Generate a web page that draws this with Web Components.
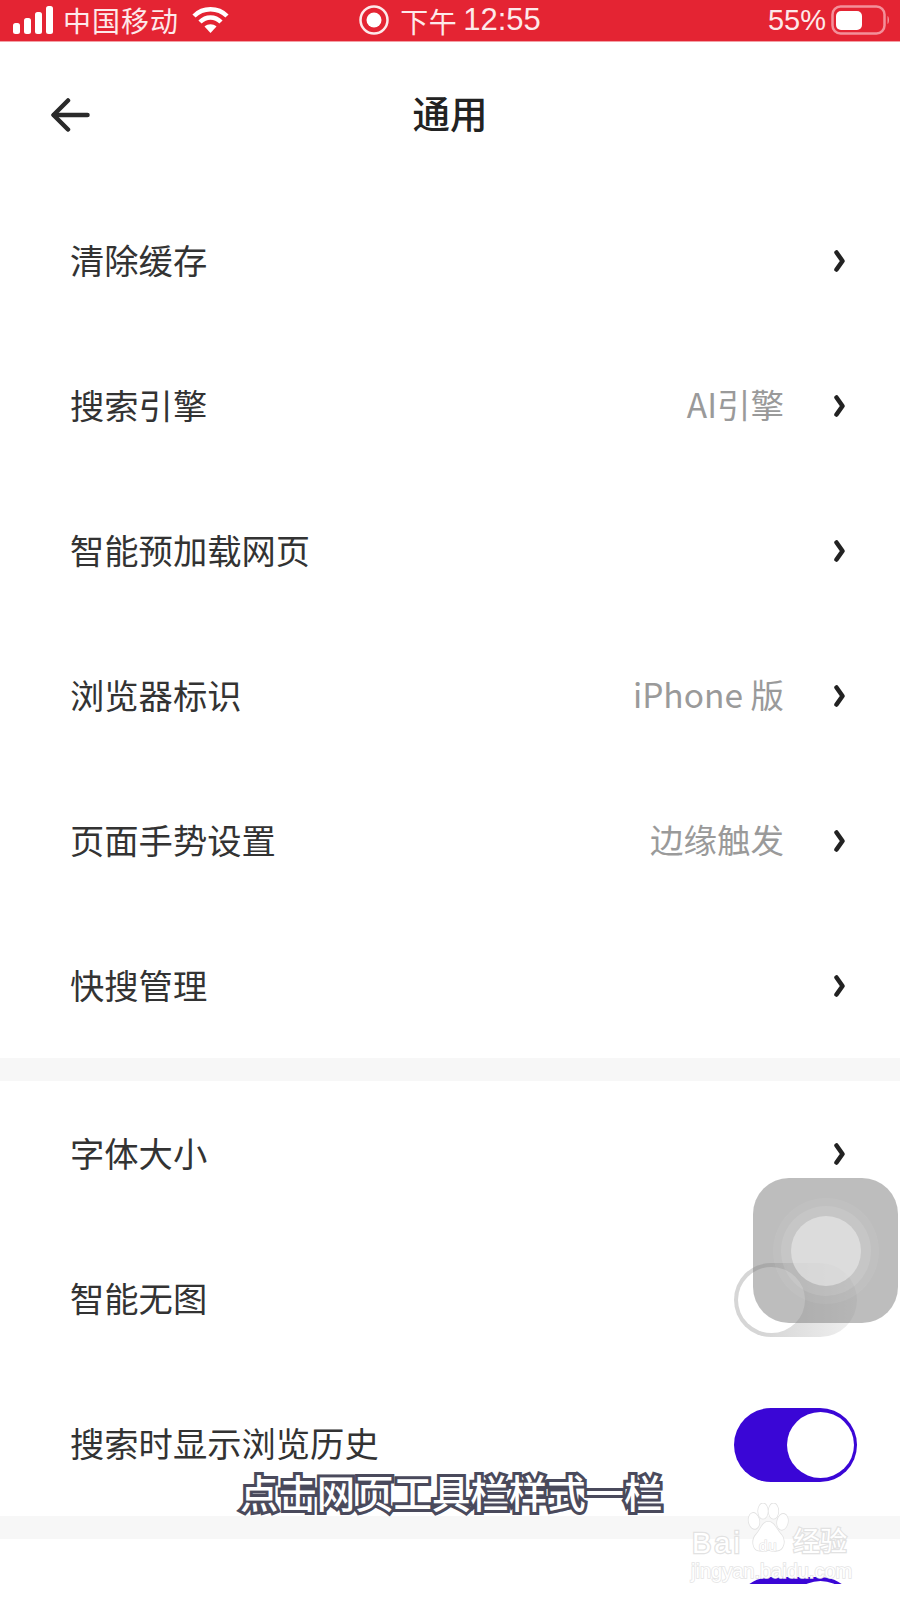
<!DOCTYPE html>
<html lang="zh">
<head>
<meta charset="utf-8">
<title>通用</title>
<style>
    html, body {
        margin: 0;
        background: #fff;
    }

    body {
        font-family: "Noto Sans CJK SC", "Liberation Sans", sans-serif;
    }

    #screen {
        position: relative;
        height: 1584px;
        overflow: hidden;
        background: #fff;
    }
</style>
</head>
<body>
<div id="screen">
    <status-bar></status-bar>
    <nav-header>通用</nav-header>
    <setting-row>清除缓存</setting-row>
    <setting-row value="AI引擎">搜索引擎</setting-row>
    <setting-row>智能预加载网页</setting-row>
    <setting-row value="iPhone 版">浏览器标识</setting-row>
    <setting-row value="边缘触发">页面手势设置</setting-row>
    <setting-row>快搜管理</setting-row>
    <section-gap></section-gap>
    <setting-row>字体大小</setting-row>
    <setting-row toggle="off">智能无图</setting-row>
    <setting-row toggle="on">搜索时显示浏览历史</setting-row>
    <section-gap></section-gap>
    <setting-row toggle="on" class="last"></setting-row>
    <assist-touch></assist-touch>
    <video-caption>点击网页工具栏样式一栏</video-caption>
    <baidu-mark></baidu-mark>
</div>

<script>
class StatusBar extends HTMLElement {
    constructor() {
        super();
        this.attachShadow({ mode: 'open' });
        this.shadowRoot.innerHTML = `
            <style>
                :host {
                    display: grid;
                    grid-template-columns: 1fr auto 1fr;
                    align-items: center;
                    height: 42px;
                    box-sizing: border-box;
                    padding: 0 10px 4px 13px;
                    background: #e42433;
                    border-bottom: 1px solid #f3a0a6;
                    color: #fde9ea;
                    font-size: 28px;
                    line-height: 36px;
                    overflow: hidden;
                }

                .side {
                    display: flex;
                    align-items: center;
                }

                .right {
                    justify-content: flex-end;
                }

                svg {
                    display: block;
                    flex: none;
                }

                #carrier {
                    margin: 0 13px 0 10px;
                    letter-spacing: 1px;
                }

                #ampm {
                    margin: 3px 0 0 11px;
                    letter-spacing: 0.5px;
                }

                #time {
                    margin-left: 6px;
                    font-family: "Liberation Sans", sans-serif;
                    font-size: 31px;
                }

                #percent {
                    margin-right: 5px;
                    font-family: "Liberation Sans", sans-serif;
                    font-size: 29px;
                }

                .center {
                    display: flex;
                    align-items: center;
                    margin-left: -3px;
                }
            </style>
            <div class="side">
                <svg width="40" height="28" viewBox="0 0 40 28" fill="#fff">
                    <rect x="0" y="17" width="7" height="11" rx="2.5"/>
                    <rect x="11" y="12" width="7" height="16" rx="2.5"/>
                    <rect x="22" y="6" width="7" height="22" rx="2.5"/>
                    <rect x="33" y="0" width="7" height="28" rx="2.5"/>
                </svg>
                <span id="carrier">中国移动</span>
                <svg width="37" height="26" viewBox="0 0 37 26" fill="none" stroke="#fff" stroke-width="4.5">
                    <path d="M2 9C11 0 26 0 35 9"/>
                    <path d="M8 15C14 9 23 9 29 15"/>
                    <path d="M18.5 26L12.5 19.500C16 16.500 21 16.500 24.500 19.500Z" fill="#fff" stroke="none"/>
                </svg>
            </div>
            <div class="center">
                <svg width="30" height="30" viewBox="0 0 30 30">
                    <circle cx="15" cy="15" r="13.500" fill="none" stroke="#fde9ea" stroke-width="2.500"/>
                    <circle cx="15" cy="15" r="7.500" fill="#fff"/>
                </svg>
                <span id="ampm">下午</span>
                <span id="time">12:55</span>
            </div>
            <div class="side right">
                <span id="percent">55%</span>
                <svg width="59" height="30" viewBox="0 0 59 30">
                    <rect x="1.500" y="1.500" width="52" height="27" rx="8" fill="none" stroke="#f3909a" stroke-width="2.500"/>
                    <rect x="5" y="6" width="26" height="19" rx="5" fill="#fff"/>
                    <path d="M56.500 11C58.500 12 58.500 18 56.500 19Z" fill="#f3909a"/>
                </svg>
            </div>
        `;
    }
}

class NavHeader extends HTMLElement {
    constructor() {
        super();
        this.attachShadow({ mode: 'open' });
        this.shadowRoot.innerHTML = `
            <style>
                :host {
                    display: grid;
                    grid-template-columns: 1fr auto 1fr;
                    align-items: center;
                    height: 146px;
                    box-sizing: border-box;
                    padding: 0 51px;
                    color: #222;
                }

                svg {
                    display: block;
                }

                #title {
                    font-size: 37.500px;
                    font-weight: 500;
                    line-height: 50px;
                    margin-top: -7px;
                }
            </style>
            <svg width="39" height="34" viewBox="0 0 39 34" fill="none" stroke="#2a2a2a" stroke-width="4.500" stroke-linecap="round" stroke-linejoin="round">
                <path d="M36.500 17H3"/>
                <path d="M17 2.500L2.500 17L17 31.500"/>
            </svg>
            <div id="title"><slot></slot></div>
            <div></div>
        `;
    }
}

class ToggleSwitch extends HTMLElement {
    constructor() {
        super();
        this.attachShadow({ mode: 'open' });
        this.shadowRoot.innerHTML = `
            <style>
                :host {
                    display: block;
                    flex: none;
                    position: relative;
                    width: 123px;
                    height: 74px;
                    margin-top: 3px;
                    box-sizing: border-box;
                    border-radius: 37px;
                    background: #3a06d6;
                }

                :host([state="off"]) {
                    background: linear-gradient(90deg, #d6d6d6 25%, #f1f1f1 100%);
                }

                #knob {
                    position: absolute;
                    top: 4px;
                    right: 3px;
                    width: 67px;
                    height: 66px;
                    border-radius: 50%;
                    background: #fff;
                }

                :host([state="off"]) #knob {
                    left: 4px;
                    right: auto;
                }
            </style>
            <div id="knob"></div>
        `;
    }
}

class SettingRow extends HTMLElement {
    constructor() {
        super();
        this.attachShadow({ mode: 'open' });
        this.shadowRoot.innerHTML = `
            <style>
                :host {
                    display: flex;
                    align-items: center;
                    height: 145px;
                    box-sizing: border-box;
                    padding: 0 55px 0 70px;
                    font-size: 34.300px;
                    line-height: 48px;
                    color: #333;
                }

                :host([toggle]) {
                    padding-right: 43px;
                }

                :host(.last) {
                    height: 147px;
                }

                #label {
                    flex: 1;
                    margin-top: -3px;
                }

                #value {
                    margin: -3px 50px 0 0;
                    font-size: 33.500px;
                    color: #9a9a9a;
                }

                svg {
                    display: block;
                    flex: none;
                }
            </style>
            <div id="label"><slot></slot></div>
        `;

        if (this.hasAttribute('toggle')) {
            const toggle = document.createElement('toggle-switch');
            toggle.setAttribute('state', this.getAttribute('toggle'));
            this.shadowRoot.appendChild(toggle);
            return;
        }

        if (this.hasAttribute('value')) {
            const value = document.createElement('div');
            value.id = 'value';
            value.textContent = this.getAttribute('value');
            this.shadowRoot.appendChild(value);
        }

        const chevron = document.createElement('template');
        chevron.innerHTML = `
            <svg width="11" height="22" viewBox="0 0 11 22" fill="none" stroke="#222" stroke-width="4.500" stroke-linecap="round" stroke-linejoin="round">
                <path d="M2.500 2.500L8.500 11L2.500 19.500"/>
            </svg>
        `;
        this.shadowRoot.appendChild(chevron.content);
    }
}

class SectionGap extends HTMLElement {
    constructor() {
        super();
        this.attachShadow({ mode: 'open' });
        this.shadowRoot.innerHTML = `
            <style>
                :host {
                    display: block;
                    height: 23px;
                    background: #f7f7f7;
                }
            </style>
        `;
    }
}

class AssistTouch extends HTMLElement {
    constructor() {
        super();
        this.attachShadow({ mode: 'open' });
        this.shadowRoot.innerHTML = `
            <style>
                :host {
                    position: absolute;
                    top: 1178px;
                    left: 753px;
                    width: 145px;
                    height: 145px;
                    display: grid;
                    place-items: center;
                    border-radius: 36px;
                    background: rgba(128, 128, 128, 0.52);
                }

                .ring {
                    display: grid;
                    place-items: center;
                    border-radius: 50%;
                    background: rgba(255, 255, 255, 0.06);
                }

                #outer {
                    width: 106px;
                    height: 106px;
                }

                #middle {
                    width: 90px;
                    height: 90px;
                    background: rgba(255, 255, 255, 0.1);
                }

                #inner {
                    width: 70px;
                    height: 70px;
                    background: rgba(235, 235, 235, 0.6);
                }
            </style>
            <div class="ring" id="outer">
                <div class="ring" id="middle">
                    <div class="ring" id="inner"></div>
                </div>
            </div>
        `;
    }
}

class VideoCaption extends HTMLElement {
    constructor() {
        super();
        this.attachShadow({ mode: 'open' });
        this.shadowRoot.innerHTML = `
            <style>
                :host {
                    position: absolute;
                    top: 1464px;
                    left: 240px;
                    width: 422px;
                    font-size: 38.400px;
                    font-weight: 500;
                    line-height: 54px;
                    white-space: nowrap;
                    color: #fff;
                    paint-order: stroke fill;
                    -webkit-text-stroke: 6px #4a4a5c;
                    text-shadow: 1px 2px 0 #4a4a5c;
                }
            </style>
            <slot></slot>
        `;
    }
}

class BaiduMark extends HTMLElement {
    constructor() {
        super();
        this.attachShadow({ mode: 'open' });
        this.shadowRoot.innerHTML = `
            <style>
                :host {
                    position: absolute;
                    top: 1500px;
                    left: 688px;
                    width: 170px;
                    height: 84px;
                    font-family: "Liberation Sans", "Noto Sans CJK SC", sans-serif;
                    color: #fff;
                    paint-order: stroke fill;
                    -webkit-text-stroke: 2.500px #e2e2e2;
                    white-space: nowrap;
                }

                svg {
                    position: absolute;
                    top: 3px;
                    left: 57px;
                }

                span {
                    position: absolute;
                }

                #bai {
                    top: 30px;
                    left: 4px;
                    font-size: 29px;
                    line-height: 26px;
                    letter-spacing: 3px;
                }

                #du {
                    top: 38px;
                    left: 71px;
                    font-size: 15px;
                    line-height: 16px;
                    letter-spacing: 1px;
                    -webkit-text-stroke: 1.200px #e2e2e2;
                }

                #jy {
                    top: 27px;
                    left: 105px;
                    font-size: 27px;
                    line-height: 26px;
                    font-family: "Noto Sans CJK SC", sans-serif;
                }

                #url {
                    top: 60px;
                    left: 3px;
                    font-size: 20px;
                    line-height: 22px;
                    -webkit-text-stroke: 1.500px #e4e4e4;
                }
            </style>
            <svg width="48" height="52" viewBox="0 0 64 58" preserveAspectRatio="none" fill="#fff" stroke="#e2e2e2" stroke-width="2">
                <ellipse cx="12" cy="20" rx="7" ry="9" transform="rotate(-18 12 20)"/>
                <ellipse cx="24" cy="9" rx="6.500" ry="8.500"/>
                <ellipse cx="38" cy="9" rx="6.500" ry="8.500"/>
                <ellipse cx="50" cy="21" rx="7" ry="9" transform="rotate(18 50 21)"/>
                <path d="M31 21C39 21 42 30 48 35C55 41 52 54 41 53C35 52 27 52 21 53C10 54 8 41 15 35C21 30 23 21 31 21Z"/>
            </svg>
            <span id="bai">Bai</span>
            <span id="du">du</span>
            <span id="jy">经验</span>
            <span id="url">jingyan.baidu.com</span>
        `;
    }
}

customElements.define('status-bar', StatusBar);
customElements.define('nav-header', NavHeader);
customElements.define('toggle-switch', ToggleSwitch);
customElements.define('setting-row', SettingRow);
customElements.define('section-gap', SectionGap);
customElements.define('assist-touch', AssistTouch);
customElements.define('video-caption', VideoCaption);
customElements.define('baidu-mark', BaiduMark);
</script>
</body>
</html>
